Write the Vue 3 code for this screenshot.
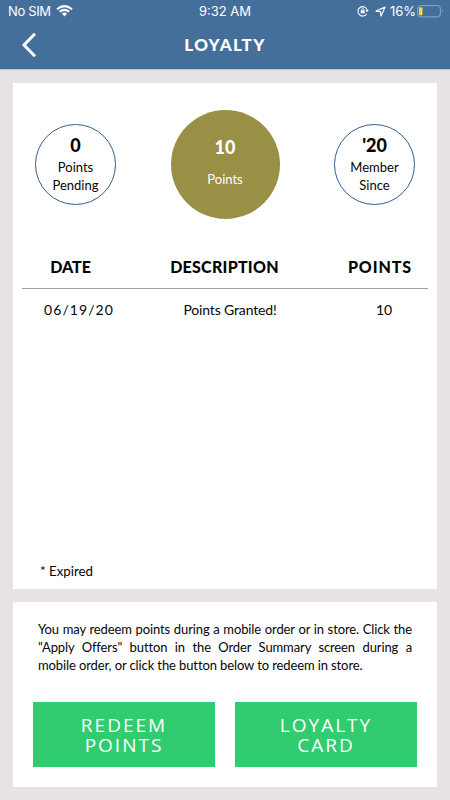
<script setup>
const stats = [
  { value: '0', lines: ['Points', 'Pending'] },
  { value: '10', lines: ['Points'], main: true },
  { value: "'20", lines: ['Member', 'Since'] },
]
const entries = [{ date: '06/19/20', description: 'Points Granted!', points: 10 }]
const notice = [
  'You may redeem points during a mobile order or in store. Click the',
  '"Apply Offers" button in the Order Summary screen during a',
  'mobile order, or click the button below to redeem in store.',
]
const actions = ['REDEEM POINTS', 'LOYALTY CARD']
</script>

<template>
  <div class="screen">
    <header>
      <div class="status">
        <div class="carrier">
          <span class="sim">No SIM</span>
          <svg width="17" height="12" viewBox="0 0 17 12" fill="none" stroke="#fff">
            <path d="M1 4.2Q8.5 -2 16 4.2" stroke-width="2" />
            <path d="M3.7 6.8Q8.5 2.9 13.3 6.8" stroke-width="2" />
            <path d="M5.9 8.5Q8.5 6.6 11.1 8.5L8.5 11.4Z" fill="#fff" stroke="none" />
          </svg>
        </div>
        <span class="clock">9:32 AM</span>
        <div class="power">
          <svg class="lock" width="12" height="12" viewBox="0 0 12 12" fill="none" stroke="#fff">
            <path d="M9.7 8.8A4.7 4.7 0 1 1 10.2 5.2" stroke-width="1.1" />
            <path d="M8.5 5H11.8L10.2 7.2Z" fill="#fff" stroke="none" />
            <path d="M3.7 5.3H7.7V8.3H3.7Z" fill="#fff" stroke="none" />
            <path d="M4.5 5.4V4.2Q5.7 2.5 6.9 4.2V5.4" stroke-width=".8" />
          </svg>
          <svg class="arrow" width="11" height="11" viewBox="0 0 11 11" fill="none" stroke="#fff" stroke-width="1.2" stroke-linejoin="round">
            <path d="M10 1L1 5.1L5.3 5.6L6 10Z" />
          </svg>
          <span class="percent">16%</span>
          <svg class="battery" width="27" height="13" viewBox="0 0 27 13">
            <rect x=".6" y=".6" width="22.8" height="11.3" rx="3" fill="none" stroke="#91aac5" />
            <rect x="2" y="2.2" width="3.5" height="8" rx="1" fill="#f5dc32" />
            <path d="M25 4.2Q26.6 6.2 25 8.3Z" fill="#a9bdd2" />
          </svg>
        </div>
      </div>
      <div class="nav">
        <svg class="back" width="16" height="26" viewBox="0 0 16 26" fill="none" stroke="#fff" stroke-width="3">
          <path d="M14 1.8L3 13L14 24.2" />
        </svg>
        <h1>LOYALTY</h1>
      </div>
    </header>

    <main>
      <section class="card history">
        <div class="stats">
          <div v-for="s in stats" :key="s.value" class="circle" :class="{ main: s.main }">
            <strong>{{ s.value }}</strong>
            <span v-for="l in s.lines" :key="l">{{ l }}</span>
          </div>
        </div>
        <div class="row head">
          <span>DATE</span><span class="desc">DESCRIPTION</span><span class="amount">POINTS</span>
        </div>
        <div v-for="e in entries" :key="e.date" class="row entry">
          <span class="date">{{ e.date }}</span><span class="desc">{{ e.description }}</span><span class="amount">{{ e.points }}</span>
        </div>
        <p class="expired">* Expired</p>
      </section>

      <section class="card redeem">
        <div class="notice">
          <p v-for="n in notice" :key="n">{{ n }}</p>
        </div>
        <div class="actions">
          <button v-for="a in actions" :key="a">{{ a }}</button>
        </div>
      </section>
    </main>
  </div>
</template>

<style>
body { margin: 0; }
</style>

<style scoped>
.screen {
  width: 450px;
  height: 800px;
  overflow: hidden;
  background: #e8e3e3;
  color: #050505;
  font-family: Lato, "Liberation Sans", sans-serif;
  font-size: 14px;
}
header {
  box-sizing: border-box;
  height: 70px;
  background: #456f9b;
  border-bottom: 1px solid #b9c5d5;
  color: #fff;
}
.status {
  display: grid;
  grid-template-columns: 1fr auto 1fr;
  height: 22px;
  padding: 0 6px 0 8px;
  align-items: center;
  font: 13px/22px Inter, sans-serif;
}
.carrier, .power { display: flex; align-items: center; }
.carrier { gap: 5px; }
.sim { letter-spacing: -.35px; }
.clock { padding-right: 2px; }
.power { justify-content: flex-end; }
.lock { margin-right: 6px; }
.arrow { margin-right: 4px; }
.percent { margin-right: 1px; }
.nav {
  display: grid;
  grid-template-columns: 60px 1fr 60px;
  align-items: center;
  height: 46px;
}
.back { margin-left: 21px; }
h1 {
  margin: 0;
  text-align: center;
  font-size: 17px;
  font-weight: 900;
  letter-spacing: 1.3px;
  line-height: 46px;
}
main {
  display: flex;
  flex-direction: column;
  gap: 13px;
  padding: 13px;
}
.card { box-sizing: border-box; background: #fff; }
.history {
  display: flex;
  flex-direction: column;
  height: 506px;
  padding: 27px 9px 9px;
}
.stats {
  display: flex;
  align-items: center;
  justify-content: space-between;
  height: 109px;
  padding: 0 13px;
}
.circle {
  box-sizing: border-box;
  display: flex;
  flex-direction: column;
  align-items: center;
  width: 81px;
  height: 81px;
  padding-top: 9px;
  border: 1px solid #335f8c;
  border-radius: 50%;
  font-size: 13px;
  line-height: 18px;
}
.circle strong { font-size: 18px; font-weight: 900; line-height: 22px; margin-bottom: 2px; }
.circle.main {
  width: 109px;
  height: 109px;
  padding-top: 26px;
  border: 0;
  background: #9a9045;
  color: #fff;
}
.circle.main strong { margin-bottom: 12px; }
.row {
  display: grid;
  grid-template-columns: 97px 211px 98px;
  text-align: center;
}
.head {
  height: 42px;
  margin-top: 27px;
  border-bottom: 1px solid #a2a2a2;
  font-size: 16px;
  font-weight: 900;
  line-height: 42px;
}
.head .desc { letter-spacing: .25px; }
.head .amount { padding-left: 2px; letter-spacing: .9px; }
.entry { line-height: 42px; }
.entry .date { padding-left: 17px; letter-spacing: 1.05px; }
.entry .desc { padding-left: 11px; letter-spacing: -.15px; }
.entry .amount { padding-left: 10px; }
.expired { margin: auto 0 0 18px; font-size: 13.3px; line-height: 18px; }
.redeem { height: 185px; padding: 18px 20px 20px; }
.notice { padding: 0 5px; line-height: 18px; white-space: nowrap; letter-spacing: -.11px; }
.notice p { margin: 0; text-align-last: justify; font-size: 13px; }
.notice p:last-child { width: 324px; }
.actions { display: flex; gap: 20px; margin-top: 28px; }
button {
  width: 182px;
  height: 65px;
  padding: 1px 40px 0;
  border: 0;
  background: #32cc70;
  color: #fff;
  font: 19px/20px "Open Sans", sans-serif;
  letter-spacing: 2px;
}
</style>
